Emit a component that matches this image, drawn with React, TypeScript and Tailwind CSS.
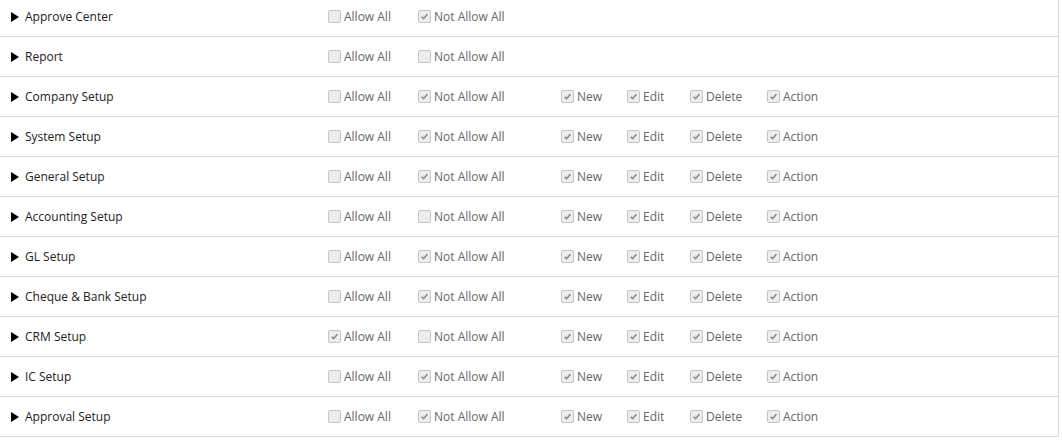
const rows = [
  { name: 'Approve Center', allow: false, notAllow: true, actions: null },
  { name: 'Report', allow: false, notAllow: false, actions: null },
  { name: 'Company Setup', allow: false, notAllow: true, actions: true },
  { name: 'System Setup', allow: false, notAllow: true, actions: true },
  { name: 'General Setup', allow: false, notAllow: true, actions: true },
  { name: 'Accounting Setup', allow: false, notAllow: false, actions: true },
  { name: 'GL Setup', allow: false, notAllow: true, actions: true },
  { name: 'Cheque & Bank Setup', allow: false, notAllow: true, actions: true },
  { name: 'CRM Setup', allow: true, notAllow: false, actions: true },
  { name: 'IC Setup', allow: false, notAllow: true, actions: true },
  { name: 'Approval Setup', allow: false, notAllow: true, actions: true },
];

function Check({ checked, label, width }: { checked: boolean; label: string; width: string }) {
  return (
    <label className={`flex items-center ${width}`}>
      <span className="flex h-[13px] w-[13px] items-center justify-center rounded-[2px] border border-[#c4c4c4] bg-[#ededed]">
        {checked && (
          <svg viewBox="0 0 10 10" className="h-[9px] w-[9px]" aria-hidden="true">
            <path d="M1.8 5.2 L4 7.3 L8.3 2.4" fill="none" stroke="#8a8a8a" strokeWidth="1.7" />
          </svg>
        )}
      </span>
      <span className="ml-[3px] text-[#666]">{label}</span>
    </label>
  );
}

export default function App() {
  return (
    <div className="h-[440px] w-[1062px] overflow-hidden bg-white font-['Open_Sans',sans-serif] text-[12px]">
      <div className="-mt-[3px] w-[1059px] border-r border-[#dcdcdc]">
        {rows.map((row) => (
          <div key={row.name} className="flex h-10 items-center border-b border-[#dcdcdc]">
            <div className="flex w-[328px] items-center pl-[11px] text-[#222]">
              <svg viewBox="0 0 8 10" className="h-[10px] w-[8px]" aria-hidden="true">
                <path d="M0 0 L8 5 L0 10 Z" fill="#000" />
              </svg>
              <span className="ml-[6px]">{row.name}</span>
            </div>
            <Check checked={row.allow} label="Allow All" width="w-[90px]" />
            <Check checked={row.notAllow} label="Not Allow All" width="w-[143px]" />
            {row.actions && (
              <>
                <Check checked label="New" width="w-[66px]" />
                <Check checked label="Edit" width="w-[63px]" />
                <Check checked label="Delete" width="w-[77px]" />
                <Check checked label="Action" width="w-[80px]" />
              </>
            )}
          </div>
        ))}
      </div>
    </div>
  );
}
